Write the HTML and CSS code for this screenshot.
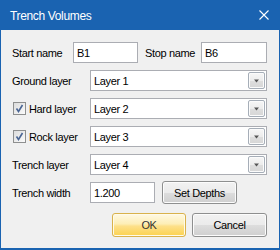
FILE: index.html
```html
<!DOCTYPE html>
<html>
<head>
<meta charset="utf-8">
<link rel="stylesheet" href="styles.css">
</head>
<body>
<div class="win">
  <div class="titlebar">
    <span class="title">Trench Volumes</span>
    <svg class="close" width="10" height="10" viewBox="0 0 10 10"><path d="M0.5 0.5 L9.5 9.5 M9.5 0.5 L0.5 9.5" stroke="#fff" stroke-width="1.1" fill="none"/></svg>
  </div>
  <div class="content">
    <div class="row">
      <span class="lbl-start">Start name</span>
      <div class="tb tb-start">B1</div>
      <span class="lbl-stop">Stop name</span>
      <div class="tb tb-stop">B6</div>
    </div>
    <div class="row">
      <span class="lbl">Ground layer</span>
      <div class="combo"><span class="ctext">Layer 1</span><span class="dd"><svg width="7" height="4" viewBox="0 0 7 4"><path d="M1 0.5 H6 L3.5 3.5 Z" fill="#555"/></svg></span></div>
    </div>
    <div class="row">
      <span class="lbl chk-lbl"><span class="chk"><svg width="11" height="11" viewBox="0 0 11 11"><path d="M2.5 5.5 L4.5 8.5 L8.5 2" stroke="#4a6594" stroke-width="1.6" fill="none"/></svg></span>Hard layer</span>
      <div class="combo"><span class="ctext">Layer 2</span><span class="dd"><svg width="7" height="4" viewBox="0 0 7 4"><path d="M1 0.5 H6 L3.5 3.5 Z" fill="#555"/></svg></span></div>
    </div>
    <div class="row">
      <span class="lbl chk-lbl"><span class="chk"><svg width="11" height="11" viewBox="0 0 11 11"><path d="M2.5 5.5 L4.5 8.5 L8.5 2" stroke="#4a6594" stroke-width="1.6" fill="none"/></svg></span>Rock layer</span>
      <div class="combo"><span class="ctext">Layer 3</span><span class="dd"><svg width="7" height="4" viewBox="0 0 7 4"><path d="M1 0.5 H6 L3.5 3.5 Z" fill="#555"/></svg></span></div>
    </div>
    <div class="row">
      <span class="lbl">Trench layer</span>
      <div class="combo"><span class="ctext">Layer 4</span><span class="dd"><svg width="7" height="4" viewBox="0 0 7 4"><path d="M1 0.5 H6 L3.5 3.5 Z" fill="#555"/></svg></span></div>
    </div>
    <div class="row">
      <span class="lbl">Trench width</span>
      <div class="tb tb-width">1.200</div>
      <div class="btn btn-set">Set Depths</div>
    </div>
    <div class="btnrow">
      <div class="btn btn-ok">OK</div>
      <div class="btn btn-cancel">Cancel</div>
    </div>
  </div>
</div>
</body>
</html>
```
FILE: styles.css
```css
* { box-sizing: border-box; }
body {
  margin: 0;
  font-family: "Liberation Sans", Arial, sans-serif;
  font-size: 11px;
  letter-spacing: -0.35px;
  color: #000;
}
.win {
  width: 280px;
  height: 250px;
  border: 1px solid #1a63b1;
  border-top: 0;
  border-bottom-width: 2px;
  background: #f0f0f0;
  display: flex;
  flex-direction: column;
}
.titlebar {
  height: 30px;
  margin: 0 -1px;
  background: #1a63b1;
  color: #fff;
  font-size: 12px;
  display: flex;
  align-items: center;
  justify-content: space-between;
  padding: 0 11px 0 10px;
}
.title { padding-top: 1px; }
.close { display: block; }
.content {
  padding: 12px 12px 0 11px;
  display: flex;
  flex-direction: column;
  gap: 7px;
}
.row {
  display: flex;
  align-items: center;
  height: 21px;
}
.lbl-start { width: 61px; flex: none; }
.lbl-stop { width: 56px; margin-left: 7px; flex: none; }
.lbl { width: 78px; flex: none; display: flex; align-items: center; }
.tb {
  height: 21px;
  border: 1px solid #abadb3;
  background: #fff;
  padding-left: 3px;
  display: flex;
  align-items: center;
  flex: none;
}
.tb-start { width: 65px; }
.tb-stop { width: 66px; }
.tb-width { width: 65px; }
.combo {
  width: 177px;
  height: 21px;
  border: 1px solid #abadb3;
  background: #fff;
  display: flex;
  align-items: center;
  justify-content: space-between;
  padding-left: 3px;
}
.dd {
  width: 17px;
  height: 17px;
  margin-right: 1px;
  border: 1px solid #a6aeb8;
  border-radius: 2px;
  background: linear-gradient(#f7f7f7 0%, #ececec 50%, #dedede 51%, #d6d6d6 100%);
  box-shadow: inset 0 0 0 1px #fbfbfb;
  display: flex;
  align-items: center;
  justify-content: center;
}
.dd svg { display: block; }
.chk-lbl { padding-left: 1px; }
.chk {
  width: 13px;
  height: 13px;
  border: 1px solid #8e8f8f;
  background: linear-gradient(135deg, #dcdcdc, #fbfbfb);
  margin-right: 3px;
  display: flex;
  align-items: center;
  justify-content: center;
}
.chk svg { display: block; }
.btn {
  border: 1px solid #8e8f8f;
  border-radius: 3px;
  background: linear-gradient(#f2f2f2 0%, #ebebeb 50%, #dddddd 51%, #cfcfcf 100%);
  box-shadow: inset 0 0 0 1px #fcfcfc;
  display: flex;
  align-items: center;
  justify-content: center;
  flex: none;
  color: #000;
}
.btn-set {
  width: 75px;
  height: 23px;
  margin-left: 7px;
}
.btnrow {
  display: flex;
  justify-content: flex-end;
  gap: 6px;
  margin-top: 3px;
}
.btn-ok {
  width: 74px;
  height: 24px;
  border-color: #d9b24c;
  background: linear-gradient(#fff9e4 0%, #fdeeb6 45%, #fde08a 55%, #fbd24f 100%);
  box-shadow: inset 0 0 0 1px #fffbea;
  color: #333;
}
.btn-cancel {
  width: 75px;
  height: 24px;
}
```
